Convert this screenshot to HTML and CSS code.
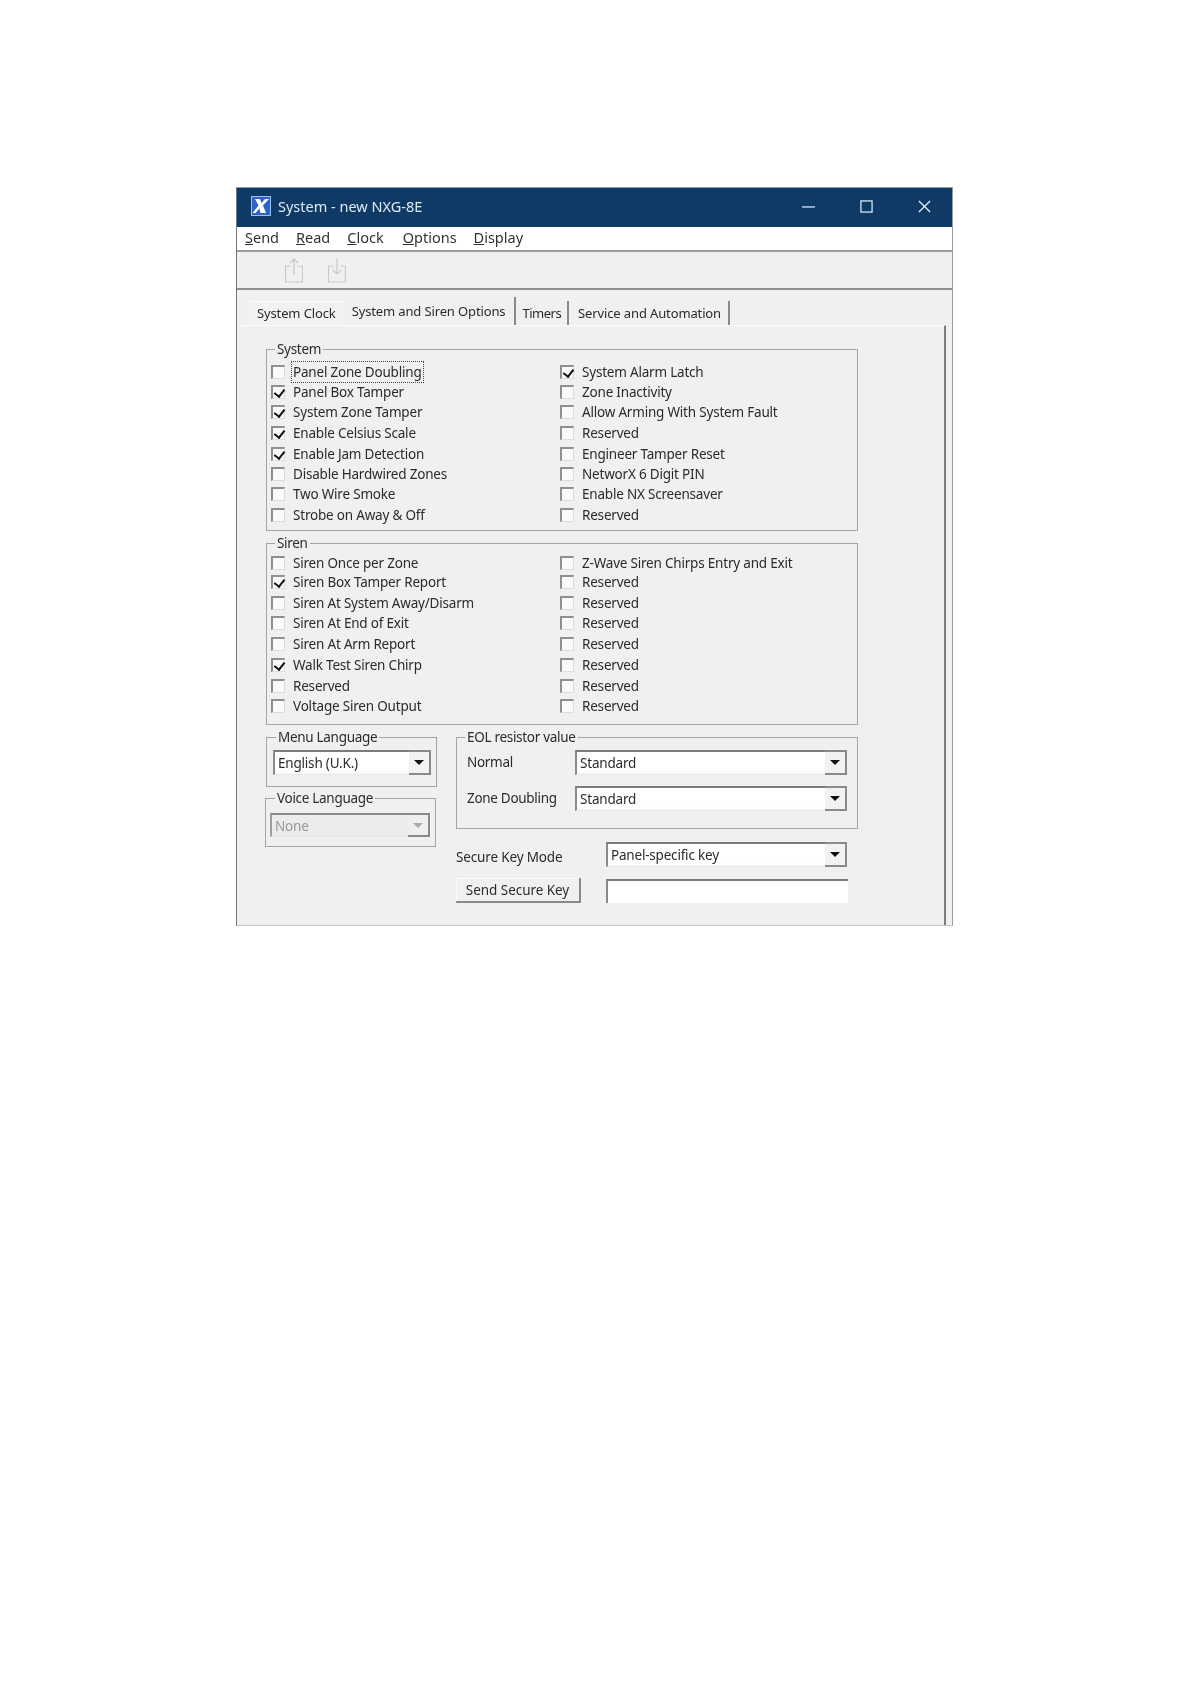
FILE: index.html
```html
<!DOCTYPE html>
<html lang="en">
<head>
<meta charset="utf-8">
<title>System - new NXG-8E</title>
<link rel="stylesheet" href="styles.css">
</head>
<body>
<main class="window">
  <header class="titlebar">
    <svg class="logo" viewBox="0 0 20 20"><rect x="0.5" y="0.5" width="19" height="19" fill="#2c63c8" stroke="#9fc0ee"/><path d="M4 3h5l1.500 4L14 3h4l-6 6.500L15 17h-5.500L8.500 12.500 4.500 17H1.500l6-7.500z" fill="#fff"/></svg>
    <span class="title">System - new NXG-8E</span>
    <div class="controls">
      <svg class="ctl" viewBox="0 0 14 14"><path d="M0 7.500h14" stroke="#d5e6f5" stroke-width="1.400"/></svg>
      <svg class="ctl" viewBox="0 0 14 14"><rect x="1" y="1" width="12" height="12" fill="none" stroke="#d5e6f5" stroke-width="1.400"/></svg>
      <svg class="ctl" viewBox="0 0 14 14"><path d="M1 1l12 12M13 1L1 13" stroke="#e4eef8" stroke-width="1.400"/></svg>
    </div>
  </header>
  <nav class="menu">
    <span><u>S</u>end</span><span><u>R</u>ead</span><span><u>C</u>lock</span><span class="menu-options"><u>O</u>ptions</span><span><u>D</u>isplay</span>
  </nav>
  <div class="toolbar">
    <svg class="tool" viewBox="0 0 18 26"><path d="M5.500 9H.5v16h17V9h-5M9 18V2M5 6l4-4 4 4" fill="none" stroke="#c9c9c9" stroke-width="1.200"/></svg>
    <svg class="tool" viewBox="0 0 18 26"><path d="M5.500 9H.5v16h17V9h-5M9 1v16M5 13l4 4 4-4" fill="none" stroke="#c9c9c9" stroke-width="1.200"/></svg>
  </div>
  <div class="tabs">
    <span class="tab plain">System Clock</span>
    <span class="tab active">System and Siren Options</span>
    <span class="tab timers">Timers</span>
    <span class="tab service">Service and Automation</span>
  </div>
  <section class="panel">
    <fieldset class="group system">
      <legend>System</legend>
      <div class="checks sys-rows">
        <label class="chk"><i class="box"></i><span class="focus">Panel Zone Doubling</span></label>
        <label class="chk"><i class="box on"></i><span>System Alarm Latch</span></label>
        <label class="chk"><i class="box on"></i><span>Panel Box Tamper</span></label>
        <label class="chk"><i class="box"></i><span>Zone Inactivity</span></label>
        <label class="chk"><i class="box on"></i><span>System Zone Tamper</span></label>
        <label class="chk"><i class="box"></i><span>Allow Arming With System Fault</span></label>
        <label class="chk"><i class="box on"></i><span>Enable Celsius Scale</span></label>
        <label class="chk"><i class="box"></i><span>Reserved</span></label>
        <label class="chk"><i class="box on"></i><span>Enable Jam Detection</span></label>
        <label class="chk"><i class="box"></i><span>Engineer Tamper Reset</span></label>
        <label class="chk"><i class="box"></i><span>Disable Hardwired Zones</span></label>
        <label class="chk"><i class="box"></i><span>NetworX 6 Digit PIN</span></label>
        <label class="chk"><i class="box"></i><span>Two Wire Smoke</span></label>
        <label class="chk"><i class="box"></i><span>Enable NX Screensaver</span></label>
        <label class="chk"><i class="box"></i><span>Strobe on Away &amp; Off</span></label>
        <label class="chk"><i class="box"></i><span>Reserved</span></label>
      </div>
    </fieldset>
    <fieldset class="group siren">
      <legend>Siren</legend>
      <div class="checks siren-rows">
        <label class="chk"><i class="box"></i><span>Siren Once per Zone</span></label>
        <label class="chk"><i class="box"></i><span>Z-Wave Siren Chirps Entry and Exit</span></label>
        <label class="chk"><i class="box on"></i><span>Siren Box Tamper Report</span></label>
        <label class="chk"><i class="box"></i><span>Reserved</span></label>
        <label class="chk"><i class="box"></i><span>Siren At System Away/Disarm</span></label>
        <label class="chk"><i class="box"></i><span>Reserved</span></label>
        <label class="chk"><i class="box"></i><span>Siren At End of Exit</span></label>
        <label class="chk"><i class="box"></i><span>Reserved</span></label>
        <label class="chk"><i class="box"></i><span>Siren At Arm Report</span></label>
        <label class="chk"><i class="box"></i><span>Reserved</span></label>
        <label class="chk"><i class="box on"></i><span>Walk Test Siren Chirp</span></label>
        <label class="chk"><i class="box"></i><span>Reserved</span></label>
        <label class="chk"><i class="box"></i><span>Reserved</span></label>
        <label class="chk"><i class="box"></i><span>Reserved</span></label>
        <label class="chk"><i class="box"></i><span>Voltage Siren Output</span></label>
        <label class="chk"><i class="box"></i><span>Reserved</span></label>
      </div>
    </fieldset>
    <div class="lower">
      <div class="lang-col">
        <fieldset class="group menu-lang">
          <legend>Menu Language</legend>
          <div class="combo"><span class="val">English (U.K.)</span><b class="arrow"></b></div>
        </fieldset>
        <fieldset class="group voice-lang">
          <legend>Voice Language</legend>
          <div class="combo disabled"><span class="val">None</span><b class="arrow"></b></div>
        </fieldset>
      </div>
      <div class="eol-col">
        <fieldset class="group eol">
          <legend>EOL resistor value</legend>
          <div class="eol-grid">
            <span class="eol-label">Normal</span>
            <div class="combo"><span class="val">Standard</span><b class="arrow"></b></div>
            <span class="eol-label">Zone Doubling</span>
            <div class="combo"><span class="val">Standard</span><b class="arrow"></b></div>
          </div>
        </fieldset>
        <div class="secure">
          <span class="secure-label">Secure Key Mode</span>
          <div class="combo"><span class="val">Panel-specific key</span><b class="arrow"></b></div>
          <button class="btn" type="button">Send Secure Key</button>
          <div class="input"></div>
        </div>
      </div>
    </div>
  </section>
</main>
</body>
</html>
```
FILE: styles.css
```css
* { box-sizing: border-box; }
html, body { margin: 0; background: #fff; }
body { padding: 187px 0 0 236px; height: 1683px; font-family: "Noto Sans", sans-serif; }

.window {
  width: 717px;
  height: 739px;
  background: #f0f0f0;
  border: 1px solid #9a9a9a;
  border-bottom-color: #c4c4c4;
  border-left-color: #777;
  display: flex;
  flex-direction: column;
  color: #2b2b2b;
  font-size: 13.5px;
  filter: blur(0.45px);
  overflow: hidden;
}

.titlebar {
  height: 39px;
  flex: none;
  background: #103a66;
  display: flex;
  align-items: center;
  padding: 0 0 3px 14px;
  color: #dfe9f3;
  font-size: 14.500px;
}
.logo { width: 20px; height: 20px; }
.title { margin-left: 7px; }
.controls { margin-left: auto; display: flex; gap: 45px; padding-right: 21px; }
.ctl { width: 13px; height: 13px; }

.menu {
  height: 25px;
  flex: none;
  background: #fff;
  border-bottom: 2px solid #9c9c9c;
  display: flex;
  gap: 17px;
  padding: 0 0 3px 8px;
  align-items: center;
  font-size: 14.500px;
  color: #333;
}
.menu-options { margin-left: 2px; }

.toolbar {
  height: 38px;
  flex: none;
  border-bottom: 2px solid #8f8f8f;
  display: flex;
  gap: 25px;
  padding: 5px 0 0 48px;
}
.tool { width: 18px; height: 26px; }

.tabs {
  height: 35px;
  flex: none;
  display: flex;
  align-items: flex-end;
  padding-left: 12px;
  font-size: 13px;
  letter-spacing: -0.13px;
}
.tab {
  height: 24px;
  line-height: 24px;
  padding: 0 7px;
  border-right: 2px solid #8a8a8a;
  white-space: nowrap;
}
.tab.plain { border-right: 0; padding: 0 8px; background: #f2f2f2; border-top: 1px solid #fafafa; line-height: 23px; }
.tab.active { height: 28px; line-height: 29px; padding: 0 9px 0 8px; background: #f0f0f0; }
.tab.timers { letter-spacing: -0.5px; padding: 0 6px; }
.tab.service { padding-left: 9px; }

.panel {
  flex: 1;
  border-top: 1px solid #fbfbfb;
  margin-right: 6px;
  border-right: 2px solid #7d7d7d;
  padding: 14px 0 0 29px;
}

.group {
  margin: 0;
  min-width: 0;
  border: 1.500px solid #a4a4a4;
  padding: 3px 4px;
}
.group legend {
  margin-left: 4px;
  padding: 0 2px;
  height: 18px;
  line-height: 18px;
  font-size: 13.500px;
  letter-spacing: -0.3px;
}

.system, .siren { width: 592px; }
.system { padding-bottom: 5px; }
.siren { margin-top: 3px; padding-top: 2px; padding-bottom: 8px; }

.checks { display: grid; grid-template-columns: 289px 1fr; }
.sys-rows { grid-template-rows: 21px 20px 20px 22px 20px 20px 20px 21px; }
.siren-rows { grid-template-rows: 18px 20px 21px 20px 21px 21px 21px 20px; }

.chk { display: flex; align-items: center; gap: 8px; white-space: nowrap; }
.chk span { letter-spacing: -0.2px; }
.focus { outline: 1px dotted #444; outline-offset: 1px; }

.box {
  width: 14px;
  height: 14px;
  flex: none;
  background: #fafafa;
  border-style: solid;
  border-width: 2px 1px 1px 2px;
  border-color: #8f8f8f #dcdcdc #dcdcdc #8f8f8f;
  position: relative;
}
.box.on::after {
  content: "";
  position: absolute;
  left: 3px;
  top: 0;
  width: 5px;
  height: 8px;
  border: solid #111;
  border-width: 0 2.500px 2.500px 0;
  transform: rotate(38deg);
}

.lower { display: flex; gap: 19px; margin-top: 3px; }
.lang-col { width: 171px; flex: none; }
.menu-lang { padding: 4px 5px 11px 6px; }
.menu-lang legend { margin-left: 3px; }
.voice-lang { margin: 2px 1px 0 -1px; padding: 6px 5px 9px 4px; }
.voice-lang legend { margin-left: 5px; }
.eol-col { width: 402px; flex: none; }
.eol { padding: 4px 10px 17px 10px; }
.eol legend { margin-left: -2px; }
.eol-grid {
  display: grid;
  grid-template-columns: 108px 1fr;
  row-gap: 11px;
  align-items: center;
}
.eol-label { white-space: nowrap; letter-spacing: -0.3px; margin-top: -2px; }

.combo {
  height: 25px;
  display: flex;
  align-items: center;
  background: linear-gradient(#fff 85%, #f7f7f7);
  border-style: solid;
  border-width: 2px 0 1px 2px;
  border-color: #7b7b7b transparent #e8e8e8 #8a8a8a;
  padding-left: 3px;
}
.val { flex: 1; white-space: nowrap; letter-spacing: -0.2px; }
.arrow {
  width: 22px;
  height: 25px;
  margin: -2px 0 -1px;
  flex: none;
  background: #f2f2f2;
  border: solid #8a8a8a;
  border-width: 2px 2px 2px 0;
  display: flex;
  align-items: center;
  justify-content: center;
}
.arrow::before {
  content: "";
  border: solid transparent;
  border-width: 5px 5px 0;
  border-top-color: #111;
}
.disabled { background: #ececec; color: #999; border-color: #8a8a8a transparent #e4e4e4 #a0a0a0; height: 24px; }
.disabled .arrow { height: 24px; background: #eee; border-color: #8a8a8a; }
.disabled .arrow::before { border-top-color: #aaa; }

.secure {
  display: grid;
  grid-template-columns: 125px 241px;
  column-gap: 25px;
  row-gap: 11px;
  margin-top: 13px;
  align-items: center;
}
.secure-label { white-space: nowrap; letter-spacing: -0.15px; margin-top: 5px; }
.btn {
  height: 25px;
  padding: 0;
  font: inherit;
  color: inherit;
  letter-spacing: -0.05px;
  background: #f0f0f0;
  border-style: solid;
  border-width: 0 2px 2px 0;
  border-color: transparent #8a8a8a #8a8a8a transparent;
  box-shadow: inset 1px 1px 0 #fbfbfb;
}
.input {
  height: 24px;
  width: 242px;
  background: #fff;
  border-style: solid;
  border-width: 2px 0 0 2px;
  border-color: #7b7b7b transparent transparent #8a8a8a;
}
```
